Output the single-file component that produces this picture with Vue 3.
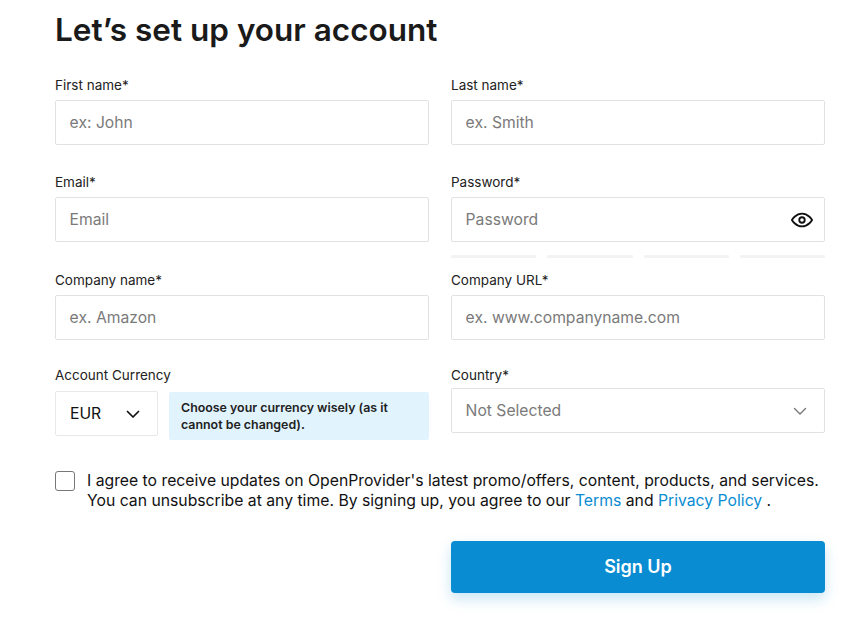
<script setup>
const rows = [
  [
    { label: 'First name*', placeholder: 'ex: John' },
    { label: 'Last name*', placeholder: 'ex. Smith' },
  ],
]
const eyePath = 'M1 12s4-7 11-7 11 7 11 7-4 7-11 7-11-7-11-7z'
</script>

<template>
  <div class="page">
    <h1>Let’s set up your account</h1>

    <div class="grid row-one">
      <template v-for="(row, i) in rows" :key="i">
        <div v-for="field in row" :key="field.label" class="field">
          <label>{{ field.label }}</label>
          <input type="text" :placeholder="field.placeholder" />
        </div>
      </template>
    </div>

    <div class="grid row-two">
      <div class="field">
        <label>Email*</label>
        <input type="text" placeholder="Email" />
      </div>
      <div class="field">
        <label>Password*</label>
        <div class="password">
          <input type="password" placeholder="Password" />
          <svg class="eye" width="22" height="22" viewBox="0 0 24 24" fill="none" stroke="#111" stroke-width="2" stroke-linecap="round" stroke-linejoin="round">
            <path :d="eyePath" />
            <circle cx="12" cy="12" r="3" />
          </svg>
        </div>
        <div class="strength">
          <span></span><span></span><span></span><span></span>
        </div>
      </div>
    </div>

    <div class="grid row-three">
      <div class="field">
        <label>Company name*</label>
        <input type="text" placeholder="ex. Amazon" />
      </div>
      <div class="field">
        <label>Company URL*</label>
        <input type="text" placeholder="ex. www.companyname.com" />
      </div>
    </div>

    <div class="grid row-four">
      <div class="field">
        <label>Account Currency</label>
        <div class="currency-row">
          <div class="currency">
            <span>EUR</span>
            <svg width="16" height="16" viewBox="0 0 16 16" fill="none" stroke="#111" stroke-width="1.7" stroke-linecap="round" stroke-linejoin="round">
              <path d="M2.5 5.5 8 11l5.5-5.5" />
            </svg>
          </div>
          <div class="notice">Choose your currency wisely (as it cannot be changed).</div>
        </div>
      </div>
      <div class="field country">
        <label>Country*</label>
        <div class="select">
          <span>Not Selected</span>
          <svg width="16" height="16" viewBox="0 0 16 16" fill="none" stroke="#777" stroke-width="1.4" stroke-linecap="round" stroke-linejoin="round">
            <path d="M2.5 5.5 8 11l5.5-5.5" />
          </svg>
        </div>
      </div>
    </div>

    <div class="agree">
      <span class="checkbox"></span>
      <p>
        I agree to receive updates on OpenProvider's latest promo/offers, content, products, and services.
        You can unsubscribe at any time. By signing up, you agree to our
        <a href="#">Terms</a> and <a href="#">Privacy Policy</a> .
      </p>
    </div>

    <div class="grid actions">
      <div></div>
      <button type="button">Sign Up</button>
    </div>
  </div>
</template>

<style>
body {
  background: #fff;
  overflow: hidden;
}
</style>

<style scoped>
.page {
  box-sizing: border-box;
  width: 864px;
  height: 624px;
  padding: 12px 39px 0 55px;
  font-family: Inter, "Liberation Sans", sans-serif;
  color: #1a1a1a;
  overflow: hidden;
}

h1 {
  margin: 0 0 28px;
  font-size: 31.5px;
  line-height: 35px;
  font-weight: 600;
  color: #1a1a1a;
}

.grid {
  display: grid;
  grid-template-columns: 374px 374px;
  column-gap: 22px;
}

.row-two {
  margin-top: 27px;
}

.row-three {
  margin-top: 12px;
}

.row-four {
  margin-top: 25px;
}

.field {
  display: flex;
  flex-direction: column;
}

label {
  display: block;
  height: 20px;
  margin-bottom: 5px;
  font-size: 13.5px;
  line-height: 21px;
  color: #222;
}

input,
.select {
  box-sizing: border-box;
  width: 100%;
  height: 45px;
  padding: 0 14px 0 13.6px;
  border: 1px solid #e2e2e2;
  border-radius: 2px;
  background: #fff;
  font-family: inherit;
  font-size: 15.7px;
  outline: none;
}

input {
  padding-bottom: 1px;
}

input::placeholder {
  color: #7a7a7a;
  opacity: 1;
}

.password {
  position: relative;
}

.eye {
  position: absolute;
  top: 12px;
  right: 12px;
}

.strength {
  display: grid;
  grid-template-columns: repeat(4, 1fr);
  column-gap: 11px;
  margin-top: 13px;
}

.strength span {
  height: 3px;
  border-radius: 1px;
  background: #f3f3f3;
}

.currency-row {
  display: flex;
  align-items: flex-start;
  gap: 11px;
  margin-top: 1px;
}

.currency {
  box-sizing: border-box;
  display: flex;
  align-items: center;
  justify-content: space-between;
  flex: 0 0 103px;
  height: 45px;
  padding: 0 16px 0 14px;
  border: 1px solid #e8e8e8;
  border-radius: 2px;
  font-size: 15.7px;
  color: #111;
}

.notice {
  box-sizing: border-box;
  flex: 1;
  height: 48px;
  margin-top: 1px;
  padding: 7px 12px;
  border-radius: 2px;
  background: #e1f3fd;
  font-size: 12.4px;
  line-height: 17px;
  font-weight: 600;
  color: #222;
}

.country label {
  margin-bottom: 3px;
}

.select {
  display: flex;
  align-items: center;
  justify-content: space-between;
  padding-right: 16px;
  color: #7a7a7a;
}

.agree {
  display: flex;
  gap: 12px;
  margin-top: 30px;
}

.checkbox {
  box-sizing: border-box;
  flex: 0 0 20px;
  height: 20px;
  margin-top: 1px;
  border: 1px solid #777;
  border-radius: 3px;
}

.agree p {
  margin: 1px 0 0;
  font-size: 15.75px;
  line-height: 20px;
  color: #111;
}

.agree a {
  color: #0a8cd2;
  text-decoration: none;
}

.actions {
  margin-top: 30px;
}

button {
  height: 52px;
  padding-bottom: 3px;
  border: 0;
  border-radius: 4px;
  background: #0a8cd2;
  box-shadow: 0 6px 14px rgba(10, 140, 210, 0.22);
  color: #fff;
  font-family: inherit;
  font-size: 18px;
  font-weight: 600;
}
</style>
